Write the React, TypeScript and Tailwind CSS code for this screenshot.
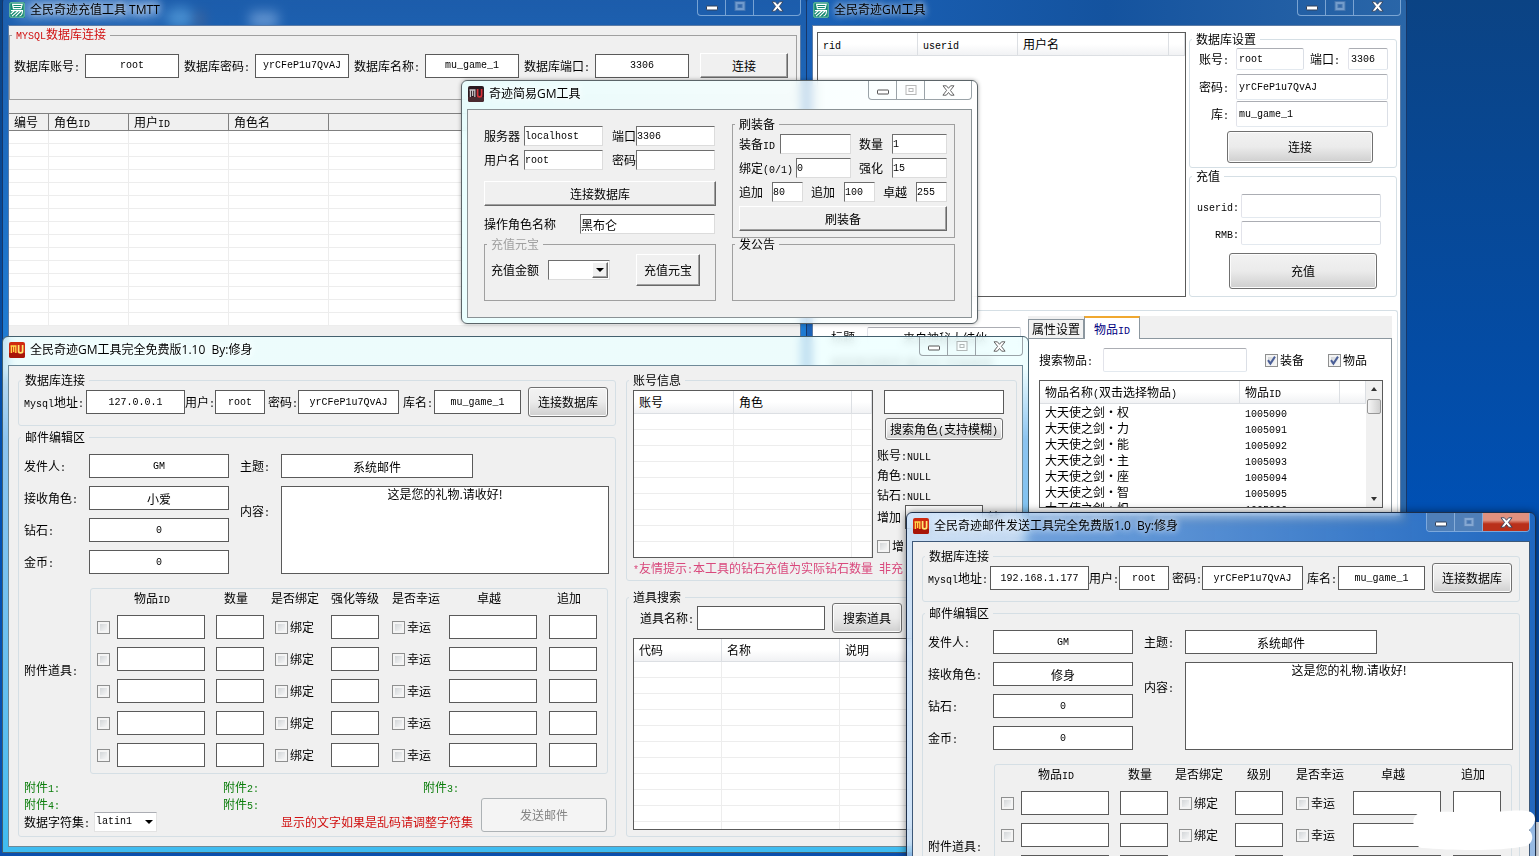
import { useId } from "react";
import type { ReactNode } from "react";
import clsx from "clsx";

/* ---------- text ---------- */

// Half-width runs sit on a 6px grid next to 12px Chinese characters
function Txt({ children }: { children: string }) {
  return (
    <>
      {children.split(/([\x20-\x7e]+)/).map((run, i) =>
        i % 2 ? (
          <span key={i} className="font-['Liberation_Mono',monospace] text-[10px] leading-none whitespace-pre">
            {run}
          </span>
        ) : (
          run
        ),
      )}
    </>
  );
}

/* ---------- controls ---------- */

const fieldStyles = {
  flat: "border border-[#5a5a5a] text-center",
  sunken: "border border-t-[#6e6e6e] border-l-[#6e6e6e] border-r-[#dcdcdc] border-b-[#dcdcdc]",
  soft: "border border-t-[#abadb3] border-l-[#e2e3ea] border-r-[#dbdfe6] border-b-[#e3e9ef] rounded-xs pl-[2px]",
};

type FieldProps = {
  label: string;
  labelClass?: string;
  inputClass: string;
  value?: string;
  look?: keyof typeof fieldStyles;
  className?: string;
};

function Field({ label, labelClass, inputClass, value = "", look = "flat", className }: FieldProps) {
  const latin = /^[\x20-\x7e]*$/.test(value);
  return (
    <label className={clsx("flex items-center whitespace-nowrap", className)}>
      <span className={clsx("shrink-0", labelClass)}>
        <Txt>{label}</Txt>
      </span>
      <input
        type="text"
        defaultValue={value}
        className={clsx(
          "min-w-0 bg-white outline-none",
          latin ? "font-['Liberation_Mono',monospace] text-[10px]" : "text-xs",
          fieldStyles[look],
          inputClass,
        )}
      />
    </label>
  );
}

function Box({ name, className }: { name: string; className: string }) {
  return (
    <input
      type="text"
      aria-label={name}
      className={clsx("block h-6 border border-[#5a5a5a] bg-white text-center outline-none", className)}
    />
  );
}

function Check({ label, hidden, checked }: { label: string; hidden?: boolean; checked?: boolean }) {
  return (
    <label className="flex items-center gap-[2px] whitespace-nowrap">
      <span className="relative block h-[13px] w-[13px] shrink-0">
        <input
          type="checkbox"
          defaultChecked={checked}
          aria-label={label}
          className="block h-[13px] w-[13px] appearance-none border border-[#8e8f8f] bg-linear-to-br from-[#c9cdd0] to-white shadow-[inset_0_0_0_2px_#f4f4f4]"
        />
        {checked && (
          <svg viewBox="0 0 13 13" className="pointer-events-none absolute inset-0" fill="none">
            <path d="M3 6.2 5.4 9.6 10 2.6" stroke="#4b5f97" strokeWidth="2" />
          </svg>
        )}
      </span>
      {!hidden && <span>{label}</span>}
    </label>
  );
}

const classicBtn =
  "border border-t-white border-l-white border-r-[#696969] border-b-[#696969] bg-[#f0f0f0] shadow-[inset_-1px_-1px_0_#a0a0a0]";
const aeroBtn =
  "rounded-[3px] border border-[#707070] bg-linear-to-b from-[#f2f2f2] from-0% via-[#ebebeb] via-50% to-[#cfcfcf] to-100% shadow-[inset_0_0_0_1px_#fcfcfc]";

function Btn({ children, className, classic }: { children: string; className: string; classic?: boolean }) {
  return (
    <button
      type="button"
      className={clsx(
        "flex shrink-0 items-center justify-center leading-4 whitespace-nowrap",
        classic ? classicBtn : aeroBtn,
        className,
      )}
    >
      <span>
        <Txt>{children}</Txt>
      </span>
    </button>
  );
}

type GroupProps = {
  title: string;
  classic?: boolean;
  className?: string;
  bodyClass?: string;
  legendClass?: string;
  children?: ReactNode;
};

function Group({ title, classic, className, bodyClass, legendClass, children }: GroupProps) {
  return (
    <fieldset
      className={clsx(
        "min-w-0 border",
        classic ? "border-[#a0a0a0]" : "rounded-[3px] border-[#d5dfe5]",
        className,
      )}
    >
      <legend className={clsx("ml-[2px] px-1 leading-3", legendClass)}>
        <Txt>{title}</Txt>
      </legend>
      <div className={bodyClass}>{children}</div>
    </fieldset>
  );
}

type Col = { title: string; width: string };

function ListView({
  cols,
  rows,
  data,
  classic,
  grid = true,
  className,
}: {
  cols: Col[];
  rows: number;
  data?: string[][];
  classic?: boolean;
  grid?: boolean;
  className?: string;
}) {
  return (
    <div className={clsx("overflow-hidden bg-white", className)}>
      <table className="w-full table-fixed border-separate border-spacing-0">
        <thead>
          <tr>
            {cols.map((c, i) => (
              <th
                key={i}
                className={clsx(
                  "border-r border-b pl-[5px] text-left font-normal whitespace-nowrap",
                  c.width,
                  classic
                    ? "h-[17px] border-[#808080] bg-[#f0f0f0] leading-4"
                    : "h-[23px] border-[#dcdfe3] bg-linear-to-b from-white from-50% to-[#f1f2f4] leading-4",
                )}
              >
                <Txt>{c.title}</Txt>
              </th>
            ))}
          </tr>
        </thead>
        <tbody>
          {Array.from({ length: rows }, (_, r) => (
            <tr key={r}>
              {cols.map((_c, i) => (
                <td
                  key={i}
                  className={clsx(
                    "p-0 pl-[5px] leading-4 whitespace-nowrap",
                    classic ? "h-[13px]" : "h-4",
                    grid && "border-r border-b border-[#ededed]",
                  )}
                >
                  {data?.[r]?.[i] && <Txt>{data[r][i]}</Txt>}
                </td>
              ))}
            </tr>
          ))}
        </tbody>
      </table>
    </div>
  );
}

/* ---------- window chrome ---------- */

function ELogo() {
  return (
    <svg viewBox="0 0 16 16" className="h-4 w-4 shrink-0" fill="none">
      <rect width="16" height="16" rx="1.5" fill="#12876f" />
      <rect x=".8" y=".8" width="14.4" height="14.4" rx="1" stroke="#bfe6dc" strokeWidth=".6" />
      <g stroke="#fff" strokeWidth="1.1">
        <path d="M3.6 2.4h9.6L12 6.6H4.4z" />
        <path d="M4 4.5h8.4M2 8.6h12M13.5 8.6c0 3-.6 5-3 5.4M5.5 8.6 1.8 12M9 9 3 14.2M12 9 6.5 14.4" />
      </g>
    </svg>
  );
}

function MuLogo({ dark }: { dark?: boolean }) {
  return (
    <svg viewBox="0 0 16 16" className="h-4 w-4 shrink-0" fill="none">
      <rect width="16" height="16" rx="2" fill={dark ? "#2a1a20" : "#cf2a10"} />
      <path d="M0 11h16v3a2 2 0 0 1-2 2H2a2 2 0 0 1-2-2z" fill={dark ? "#4a2a30" : "#a81508"} />
      <path d="M1.5 4h6M2.4 11V4.5M4.6 4.5V10M6.8 4.5V11" stroke={dark ? "#c9c3c6" : "#ffd84a"} strokeWidth="1.3" />
      <path d="M9.6 3v6.2c0 2.2 4 2.2 4 0V3" stroke={dark ? "#d8323a" : "#ffe873"} strokeWidth="1.7" />
    </svg>
  );
}

type Tone = "blue" | "light" | "active";

function Caption({ tone }: { tone: Tone }) {
  const light = tone === "light";
  const line = light ? "border-[#9aa3a8]" : "border-[#9fc0e6]/70";
  const fill = "#fff";
  const stroke = light ? "#555" : "#30405a";
  return (
    <div className={clsx("flex h-[19px] shrink-0 overflow-hidden rounded-b-[4px] border border-t-0", line)}>
      <button
        type="button"
        aria-label="最小化"
        className={clsx("flex w-7 items-center justify-center border-r", line, tone === "active" && "bg-[#4f7fb8]")}
      >
        <svg viewBox="0 0 12 10" className="h-[10px] w-3">
          <rect x=".5" y="5" width="11" height="4" rx=".5" fill={fill} stroke={stroke} />
        </svg>
      </button>
      <button
        type="button"
        aria-label="最大化"
        className={clsx("flex w-7 items-center justify-center border-r", line, tone === "active" && "bg-[#4f7fb8]")}
      >
        <svg viewBox="0 0 12 10" className="h-[10px] w-3 opacity-60" fill="none">
          <rect x="1" y=".5" width="10" height="9" fill={light ? "#fff" : "#a9c4e4"} stroke={light ? "#888" : "#5f86b8"} />
          <rect x="4" y="3.5" width="4" height="3" fill={light ? "#fff" : "#3f6fae"} stroke={light ? "#888" : "#5f86b8"} />
        </svg>
      </button>
      <button
        type="button"
        aria-label="关闭"
        className={clsx(
          "flex w-[46px] items-center justify-center",
          tone === "active" && "bg-linear-to-b from-[#e0917f] from-40% to-[#b9301a] to-60%",
        )}
      >
        <svg viewBox="0 0 13 11" className="h-[11px] w-[13px]">
          <path
            d="M1 .8h3.4l2.1 2.5L8.6.8H12L8.4 5.4l3.7 4.8H8.7L6.5 7.5l-2.2 2.7H.9l3.7-4.8z"
            fill={fill}
            stroke={stroke}
            strokeWidth=".9"
          />
        </svg>
      </button>
    </div>
  );
}

function Win({
  title,
  logo,
  tone,
  className,
  clientClass,
  children,
}: {
  title: string;
  logo: ReactNode;
  tone: Tone;
  className: string;
  clientClass?: string;
  children: ReactNode;
}) {
  return (
    <section
      aria-label={title}
      className={clsx("absolute rounded-t-md border px-[5px] pb-[5px]", className)}
    >
      <header className="flex h-7 items-start justify-between">
        <div className="flex h-[26px] items-center gap-[5px] pl-[1px]">
          {logo}
          <h2 className="font-['Open_Sans','Noto_Sans_CJK_SC',sans-serif] leading-4 whitespace-pre [text-shadow:0_0_6px_#fff,0_0_10px_#fffa]">
            {title}
          </h2>
        </div>
        <Caption tone={tone} />
      </header>
      <div className={clsx("border", clientClass)}>{children}</div>
    </section>
  );
}

/* ---------- mail form, shared by two windows ---------- */

type MailProps = { host: string; receiver: string; levelTitle: string };

function MailForm({ host, receiver, levelTitle }: MailProps) {
  const contentId = useId();
  const charsetId = useId();
  return (
    <div className="w-[598px] shrink-0">
      <Group title="数据库连接" bodyClass="pt-[1px] pb-2 pl-[5px]">
        <div className="flex items-center">
          <Field label="Mysql地址:" labelClass="w-[62px]" inputClass="h-6 w-[99px]" value={host} />
          <Field label="用户:" labelClass="w-[30px]" inputClass="h-6 w-[50px]" value="root" />
          <Field label="密码:" labelClass="w-[30px]" inputClass="h-6 w-[101px]" value="yrCFeP1u7QvAJ" className="ml-[3px]" />
          <Field label="库名:" labelClass="w-[31px]" inputClass="h-6 w-[87px]" value="mu_game_1" className="ml-1" />
          <Btn className="ml-[7px] h-[30px] w-20">连接数据库</Btn>
        </div>
      </Group>

      <Group title="邮件编辑区" className="mt-[5px]" bodyClass="pt-[11px] pb-1 pl-[5px]">
        <div className="flex gap-[11px]">
          <div className="flex flex-col gap-2">
            <Field label="发件人:" labelClass="w-[65px]" inputClass="h-6 w-[140px]" value="GM" />
            <Field label="接收角色:" labelClass="w-[65px]" inputClass="h-6 w-[140px]" value={receiver} />
            <Field label="钻石:" labelClass="w-[65px]" inputClass="h-6 w-[140px]" value="0" />
            <Field label="金币:" labelClass="w-[65px]" inputClass="h-6 w-[140px]" value="0" />
          </div>
          <div className="flex flex-col gap-2">
            <Field label="主题:" labelClass="w-[41px]" inputClass="h-6 w-48" value="系统邮件" />
            <div className="flex items-start">
              <label htmlFor={contentId} className="w-[41px] pt-[17px]">
                <Txt>内容:</Txt>
              </label>
              <textarea
                id={contentId}
                defaultValue="这是您的礼物.请收好!"
                className="h-[88px] w-[328px] resize-none border border-[#5a5a5a] bg-white text-center leading-[14px] outline-none"
              />
            </div>
          </div>
        </div>

        <div className="mt-[14px] flex items-start">
          <span className="w-[66px] pt-[74px]">
            <Txt>附件道具:</Txt>
          </span>
          <div className="w-[518px] rounded-[3px] border border-[#d5dfe5]">
            <table className="w-full table-fixed border-separate border-spacing-0">
              <thead>
                <tr className="text-left align-top leading-[18px] whitespace-nowrap [&>th]:font-normal">
                  <th className="h-[26px] w-[26px]" />
                  <th className="w-[99px] pl-[17px]">
                    <Txt>物品ID</Txt>
                  </th>
                  <th className="w-[55px] pl-2">数量</th>
                  <th className="w-[60px]">是否绑定</th>
                  <th className="w-[61px]">
                    <span className="block w-12 text-center">{levelTitle}</span>
                  </th>
                  <th className="w-[57px]">是否幸运</th>
                  <th className="w-[100px] pl-7">卓越</th>
                  <th className="pl-2">追加</th>
                </tr>
              </thead>
              <tbody>
                {[1, 2, 3, 4, 5].map((n) => (
                  <tr key={n} className="[&>td]:pb-2 last:[&>td]:pb-[6px]">
                    <td className="pl-[6px]">
                      <Check label={`附件${n}`} hidden />
                    </td>
                    <td>
                      <Box name={`物品ID ${n}`} className="w-[88px]" />
                    </td>
                    <td>
                      <Box name={`数量 ${n}`} className="w-12" />
                    </td>
                    <td className="pl-1">
                      <Check label="绑定" />
                    </td>
                    <td>
                      <Box name={`${levelTitle} ${n}`} className="w-12" />
                    </td>
                    <td>
                      <Check label="幸运" />
                    </td>
                    <td>
                      <Box name={`卓越 ${n}`} className="w-[88px]" />
                    </td>
                    <td>
                      <Box name={`追加 ${n}`} className="w-12" />
                    </td>
                  </tr>
                ))}
              </tbody>
            </table>
          </div>
        </div>

        <div className="mt-1 flex items-end">
          <div className="w-[457px]">
            <div className="grid grid-cols-[199px_200px_auto] leading-[17px] text-[#0b7d0b]">
              {[1, 2, 3, 4, 5].map((n) => (
                <span key={n}>
                  <Txt>{`附件${n}:`}</Txt>
                </span>
              ))}
            </div>
            <div className="flex items-center">
              <label htmlFor={charsetId} className="w-[70px]">
                <Txt>数据字符集:</Txt>
              </label>
              <div className="relative">
                <select
                  id={charsetId}
                  className="block h-5 w-[63px] appearance-none border border-[#e3e3e3] border-t-[#abadb3] bg-white pl-[1px] font-['Liberation_Mono',monospace] text-[10px]"
                >
                  <option>latin1</option>
                </select>
                <svg viewBox="0 0 8 4" className="pointer-events-none absolute top-2 right-1 h-1 w-2">
                  <path d="M0 0h8L4 4z" fill="#000" />
                </svg>
              </div>
              <span className="mr-2 ml-auto text-[#d01010]">显示的文字如果是乱码请调整字符集</span>
            </div>
          </div>
          <button
            type="button"
            disabled
            className="h-[34px] w-[126px] rounded-[3px] border border-[#adb2b5] bg-[#f4f4f4] text-[#838383]"
          >
            发送邮件
          </button>
        </div>
      </Group>
    </div>
  );
}

/* ---------- windows ---------- */

function RechargeTool() {
  const f = { labelClass: "w-[71px]", inputClass: "h-6 w-[94px]" };
  return (
    <Win
      title="全民奇迹充值工具 TMTT"
      logo={<ELogo />}
      tone="blue"
      className="-top-1 left-[2px] w-[805px] border-[#17386a] bg-linear-to-b from-[#2468bc]/70 to-[#1f7fd6] backdrop-blur-xs"
      clientClass="border-[#5c7ca6] bg-[#f0f0f0] pt-[2px] pb-12"
    >
      <Group
        title="MYSQL数据库连接"
        classic
        legendClass="text-[#d01010]"
        className="mr-[3px]"
        bodyClass="pt-[11px] pb-[21px]"
      >
        <div className="flex items-center gap-[5px] pl-1">
          <Field label="数据库账号:" value="root" {...f} />
          <Field label="数据库密码:" value="yrCFeP1u7QvAJ" {...f} />
          <Field label="数据库名称:" value="mu_game_1" {...f} />
          <Field label="数据库端口:" value="3306" {...f} />
          <Btn classic className="ml-[6px] h-[25px] w-[88px]">
            连接
          </Btn>
        </div>
      </Group>
      <ListView
        classic
        rows={15}
        className="mt-[13px] border-t border-[#808080]"
        cols={[
          { title: "编号", width: "w-[40px]" },
          { title: "角色ID", width: "w-[80px]" },
          { title: "用户ID", width: "w-[100px]" },
          { title: "角色名", width: "w-[100px]" },
          { title: "", width: "w-auto" },
        ]}
      />
    </Win>
  );
}

const items = [
  ["大天使之剑·权", "1005090"],
  ["大天使之剑·力", "1005091"],
  ["大天使之剑·能", "1005092"],
  ["大天使之剑·主", "1005093"],
  ["大天使之剑·座", "1005094"],
  ["大天使之剑·智", "1005095"],
  ["大天使之剑·炽", "1005096"],
];

function GmTool() {
  return (
    <Win
      title="全民奇迹GM工具"
      logo={<ELogo />}
      tone="blue"
      className="-top-1 left-[806px] w-[601px] border-[#17386a] bg-linear-to-r from-[#1b62b8] via-[#14539f] to-[#2a66a8]"
      clientClass="border-[#5c7ca6] bg-white pt-[6px] pb-1"
    >
      <div className="flex items-start pl-1">
        <ListView
          rows={0}
          className="h-[265px] w-[369px] shrink-0 border border-[#5a5a5a]"
          cols={[
            { title: "rid", width: "w-[100px]" },
            { title: "userid", width: "w-[100px]" },
            { title: "用户名", width: "w-[151px]" },
            { title: "", width: "w-auto" },
          ]}
        />
        <div className="ml-[3px] w-[208px] pt-[1px]">
          <Group title="数据库设置" bodyClass="pt-[3px] pb-1">
            <div className="flex">
              <Field look="soft" label="账号:" labelClass="mr-[7px] w-[39px] text-right" inputClass="h-[22px] w-[68px]" value="root" />
              <Field look="soft" label="端口:" labelClass="ml-[6px] w-[38px]" inputClass="h-[22px] w-10" value="3306" />
            </div>
            <Field look="soft" label="密码:" labelClass="mr-[7px] w-[39px] text-right" inputClass="h-[26px] w-[152px]" value="yrCFeP1u7QvAJ" className="mt-1" />
            <Field look="soft" label="库:" labelClass="mr-[7px] w-[39px] text-right" inputClass="h-[26px] w-[152px]" value="mu_game_1" className="mt-[1px]" />
            <Btn className="mt-1 ml-[37px] h-8 w-[146px]">连接</Btn>
          </Group>
          <Group title="充值" className="mt-[2px]" bodyClass="pt-3 pb-[7px]">
            <Field look="soft" label="userid:" labelClass="mr-[2px] w-[49px] text-right" inputClass="h-6 w-[140px]" />
            <Field look="soft" label="RMB:" labelClass="mr-[2px] w-[49px] text-right" inputClass="h-6 w-[140px]" className="mt-[3px]" />
            <Btn className="mt-2 ml-[39px] h-9 w-[148px]">充值</Btn>
          </Group>
        </div>
      </div>

      <div className="mt-[13px] mr-[2px] flex items-start rounded-tr-[3px] border-t border-r border-[#d5dfe5]">
        <div className="w-[215px] shrink-0 pt-4 pl-[18px]">
          <Field look="soft" label="标题" labelClass="w-[36px]" inputClass="h-5 w-[154px] text-center" value="来自神秘大结伙" />
          <p className="pt-2 whitespace-nowrap">如何发送邮件 备注文 可选择项</p>
        </div>
        <div className="mr-[5px] flex-1 pt-[5px]">
          <div role="tablist" className="flex items-end bg-[#f0f0f0]">
            <button type="button" role="tab" aria-selected="false" className="h-[19px] w-14 border border-b-0 border-[#8c979f] bg-[#f2f2f2] leading-4 whitespace-nowrap">
              属性设置
            </button>
            <button
              type="button"
              role="tab"
              aria-selected="true"
              className="relative -mb-px h-[23px] w-14 border border-t-2 border-b-0 border-[#8c979f] border-t-[#f0a830] bg-white leading-4 text-[#00007f]"
            >
              <Txt>物品ID</Txt>
            </button>
          </div>
          <div className="border border-b-0 border-[#8c979f] pt-[9px] pl-[10px]">
            <div className="flex items-center">
              <Field look="soft" label="搜索物品:" labelClass="w-16" inputClass="h-6 w-36" className="mr-[18px]" />
              <Check label="装备" checked />
              <div className="ml-6">
                <Check label="物品" checked />
              </div>
            </div>
            <div className="mt-2 mr-2 flex h-32 border border-[#5a5a5a]">
              <ListView
                rows={items.length}
                data={items}
                grid={false}
                className="flex-1"
                cols={[
                  { title: "物品名称(双击选择物品)", width: "w-[200px]" },
                  { title: "物品ID", width: "w-[100px]" },
                  { title: "", width: "w-auto" },
                ]}
              />
              <div className="flex w-4 flex-col items-center bg-[#f0f0f0] py-[6px]">
                <svg viewBox="0 0 6 4" className="h-1 w-[6px]">
                  <path d="M0 4h6L3 0z" fill="#333" />
                </svg>
                <div className="mt-2 h-[15px] w-[14px] rounded-xs border border-[#979797] bg-linear-to-r from-[#f5f5f5] to-[#d0d0d0]" />
                <svg viewBox="0 0 6 4" className="mt-auto h-1 w-[6px]">
                  <path d="M0 0h6L3 4z" fill="#333" />
                </svg>
              </div>
            </div>
            <div className="h-1" />
          </div>
        </div>
      </div>
    </Win>
  );
}

function MailTool() {
  return (
    <Win
      title="全民奇迹GM工具完全免费版1.10  By:修身"
      logo={<MuLogo />}
      tone="light"
      className="top-[336px] left-[2px] w-[1027px] border-[#44606e] bg-linear-to-b from-[#ecffff]/80 from-6% via-[#8cc4f0] via-20% to-[#3fbcf0] backdrop-blur-xs"
      clientClass="flex gap-[10px] border-[#6f8a98] bg-[#f0f0f0] pt-2 pr-[5px] pb-[9px] pl-[9px]"
    >
      <MailForm host="127.0.0.1" receiver="小爱" levelTitle="强化等级" />
      <div className="min-w-0 flex-1">
        <Group title="账号信息" bodyClass="px-[6px] pt-1 pb-1">
          <div className="flex gap-1">
            <ListView
              rows={9}
              className="h-[168px] w-60 shrink-0 border border-[#5a5a5a]"
              cols={[
                { title: "账号", width: "w-[100px]" },
                { title: "角色", width: "w-[118px]" },
                { title: "", width: "w-auto" },
              ]}
            />
            <div className="whitespace-nowrap">
              <Box name="搜索角色" className="ml-[7px] w-[120px]" />
              <Btn className="mt-1 ml-2 h-[22px] w-[118px]">搜索角色(支持模糊)</Btn>
              <div className="mt-[5px] leading-5">
                <p>
                  <Txt>账号:NULL</Txt>
                </p>
                <p>
                  <Txt>角色:NULL</Txt>
                </p>
                <p>
                  <Txt>钻石:NULL</Txt>
                </p>
              </div>
              <div className="flex items-center gap-[5px]">
                <Field label="增加" labelClass="w-7" inputClass="h-6 w-[78px]" />
                <span>钻</span>
              </div>
              <div className="mt-[9px]">
                <Check label="增" />
              </div>
            </div>
          </div>
          <p className="mt-[2px] leading-4 whitespace-nowrap text-[#d9487c]">
            <Txt>*友情提示:本工具的钻石充值为实际钻石数量 非充</Txt>
          </p>
        </Group>

        <Group title="道具搜索" className="mt-[10px]" bodyClass="px-[6px] pb-[6px]">
          <div className="flex items-center gap-[7px] pl-[7px]">
            <Field label="道具名称:" labelClass="w-[57px]" inputClass="h-6 w-32" />
            <Btn className="h-[30px] w-[70px]">搜索道具</Btn>
          </div>
          <ListView
            rows={11}
            className="mt-[5px] h-48 border border-[#5a5a5a]"
            cols={[
              { title: "代码", width: "w-[88px]" },
              { title: "名称", width: "w-[118px]" },
              { title: "说明", width: "w-[118px]" },
              { title: "", width: "w-auto" },
            ]}
          />
        </Group>
      </div>
    </Win>
  );
}

function SimpleGmTool() {
  const amountId = useId();
  return (
    <Win
      title="奇迹简易GM工具"
      logo={<MuLogo dark />}
      tone="light"
      className="top-20 left-[461px] w-[517px] rounded-md border-[#5b6468] bg-linear-to-r from-[#e6ffff]/80 to-white/80 shadow-[0_0_4px_#0005] backdrop-blur-xs"
      clientClass="flex items-start gap-4 border-[#8a9295] bg-[#f0f0f0] pt-2 pr-4 pb-4 pl-4"
    >
      <div className="w-[232px] shrink-0 pt-2">
        <div className="grid grid-cols-[128px_auto] gap-y-1">
          <Field look="sunken" label="服务器" labelClass="w-10" inputClass="h-5 w-[79px]" value="localhost" />
          <Field look="sunken" label="端口" labelClass="w-6" inputClass="h-5 w-[79px]" value="3306" />
          <Field look="sunken" label="用户名" labelClass="w-10" inputClass="h-5 w-[79px]" value="root" />
          <Field look="sunken" label="密码" labelClass="w-6" inputClass="h-5 w-[79px]" />
        </div>
        <Btn classic className="mt-[11px] h-[25px] w-[232px]">
          连接数据库
        </Btn>
        <Field look="sunken" label="操作角色名称" labelClass="w-24" inputClass="h-5 w-[135px]" value="黑布仑" className="mt-2" />
        <Group
          title="充值元宝"
          classic
          legendClass="text-[#a0a0a0]"
          className="mt-1"
          bodyClass="flex items-center pt-1 pb-[14px] pl-[6px]"
        >
          <label htmlFor={amountId} className="w-[57px]">
            充值金额
          </label>
          <div className="relative">
            <select
              id={amountId}
              className="block h-5 w-[62px] appearance-none border border-[#dcdcdc] border-t-[#6e6e6e] border-l-[#6e6e6e] bg-white"
            />
            <span className={clsx("pointer-events-none absolute top-[2px] right-[2px] flex h-4 w-4 items-center justify-center", classicBtn)}>
              <svg viewBox="0 0 8 4" className="h-1 w-2">
                <path d="M0 0h8L4 4z" fill="#000" />
              </svg>
            </span>
          </div>
          <Btn classic className="ml-[26px] h-8 w-16">
            充值元宝
          </Btn>
        </Group>
      </div>

      <div className="min-w-0 flex-1">
        <Group title="刷装备" classic bodyClass="flex flex-col gap-1 pt-1 pr-[7px] pb-[6px] pl-[6px]">
          <div className="flex justify-between">
            <Field look="sunken" label="装备ID" labelClass="w-[41px]" inputClass="h-5 w-[71px]" />
            <Field look="sunken" label="数量" labelClass="w-[33px]" inputClass="h-5 w-[55px]" value="1" />
          </div>
          <div className="flex justify-between">
            <Field look="sunken" label="绑定(0/1)" labelClass="w-[57px]" inputClass="h-5 w-[55px]" value="0" />
            <Field look="sunken" label="强化" labelClass="w-[33px]" inputClass="h-5 w-[55px]" value="15" />
          </div>
          <div className="flex justify-between">
            <Field look="sunken" label="追加" labelClass="w-[33px]" inputClass="h-5 w-[31px]" value="80" />
            <Field look="sunken" label="追加" labelClass="w-[33px]" inputClass="h-5 w-[31px]" value="100" />
            <Field look="sunken" label="卓越" labelClass="w-[33px]" inputClass="h-5 w-[31px]" value="255" />
          </div>
          <Btn classic className="h-[25px]">
            刷装备
          </Btn>
        </Group>
        <Group title="发公告" classic bodyClass="h-[50px]" />
      </div>
    </Win>
  );
}

function MailSender() {
  return (
    <Win
      title="全民奇迹邮件发送工具完全免费版1.0  By:修身"
      logo={<MuLogo />}
      tone="active"
      className="top-[512px] left-[906px] w-[630px] border-[#1d2f4a] bg-linear-to-r from-[#bcd8f6]/70 to-[#3f80cc]/50 shadow-[0_0_8px_#0008] backdrop-blur-xs"
      clientClass="border-[#3d5878] bg-[#f0f0f0] pt-2 pb-[9px] pl-[9px]"
    >
      <MailForm host="192.168.1.177" receiver="修身" levelTitle="级别" />
    </Win>
  );
}

export default function App() {
  return (
    <main className="relative h-screen overflow-hidden bg-linear-to-b from-[#0b4384] via-[#0050b4] via-60% to-[#0a4fae] font-['Noto_Sans_CJK_SC',sans-serif] text-xs leading-4 text-black">
      {/* Desktop icons showing through the glass title bar */}
      <div className="absolute top-0 left-4 h-5 w-36 rounded bg-[#c4d6ec] blur-xs" />
      <div className="absolute top-2 left-[166px] h-5 w-7 rounded-full bg-[#a5ecff] blur-xs" />
      <div className="absolute top-3 left-[196px] h-4 w-2 bg-[#9a5a3a] blur-xs" />
      <div className="absolute top-3 left-[250px] h-4 w-7 bg-white blur-xs" />
      {/* Pale strip along the lower right edge */}
      <div className="absolute right-0 bottom-0 h-[34px] w-10 bg-[#eef3fa]" />

      <RechargeTool />
      <GmTool />
      <MailTool />
      <SimpleGmTool />
      <MailSender />

      {/* White brush strokes over the corner */}
      <svg viewBox="0 0 124 46" className="pointer-events-none absolute right-[2px] bottom-0 h-[46px] w-[124px]">
        <path
          d="M6 3C30 0 55 4 80 2s38-3 41 3-1 11-5 15c6 6 3 14-3 16-30 6-76 4-104 2-9-2-10-13-4-18C-1 16-2 7 6 3z"
          fill="#fff"
        />
      </svg>
    </main>
  );
}
